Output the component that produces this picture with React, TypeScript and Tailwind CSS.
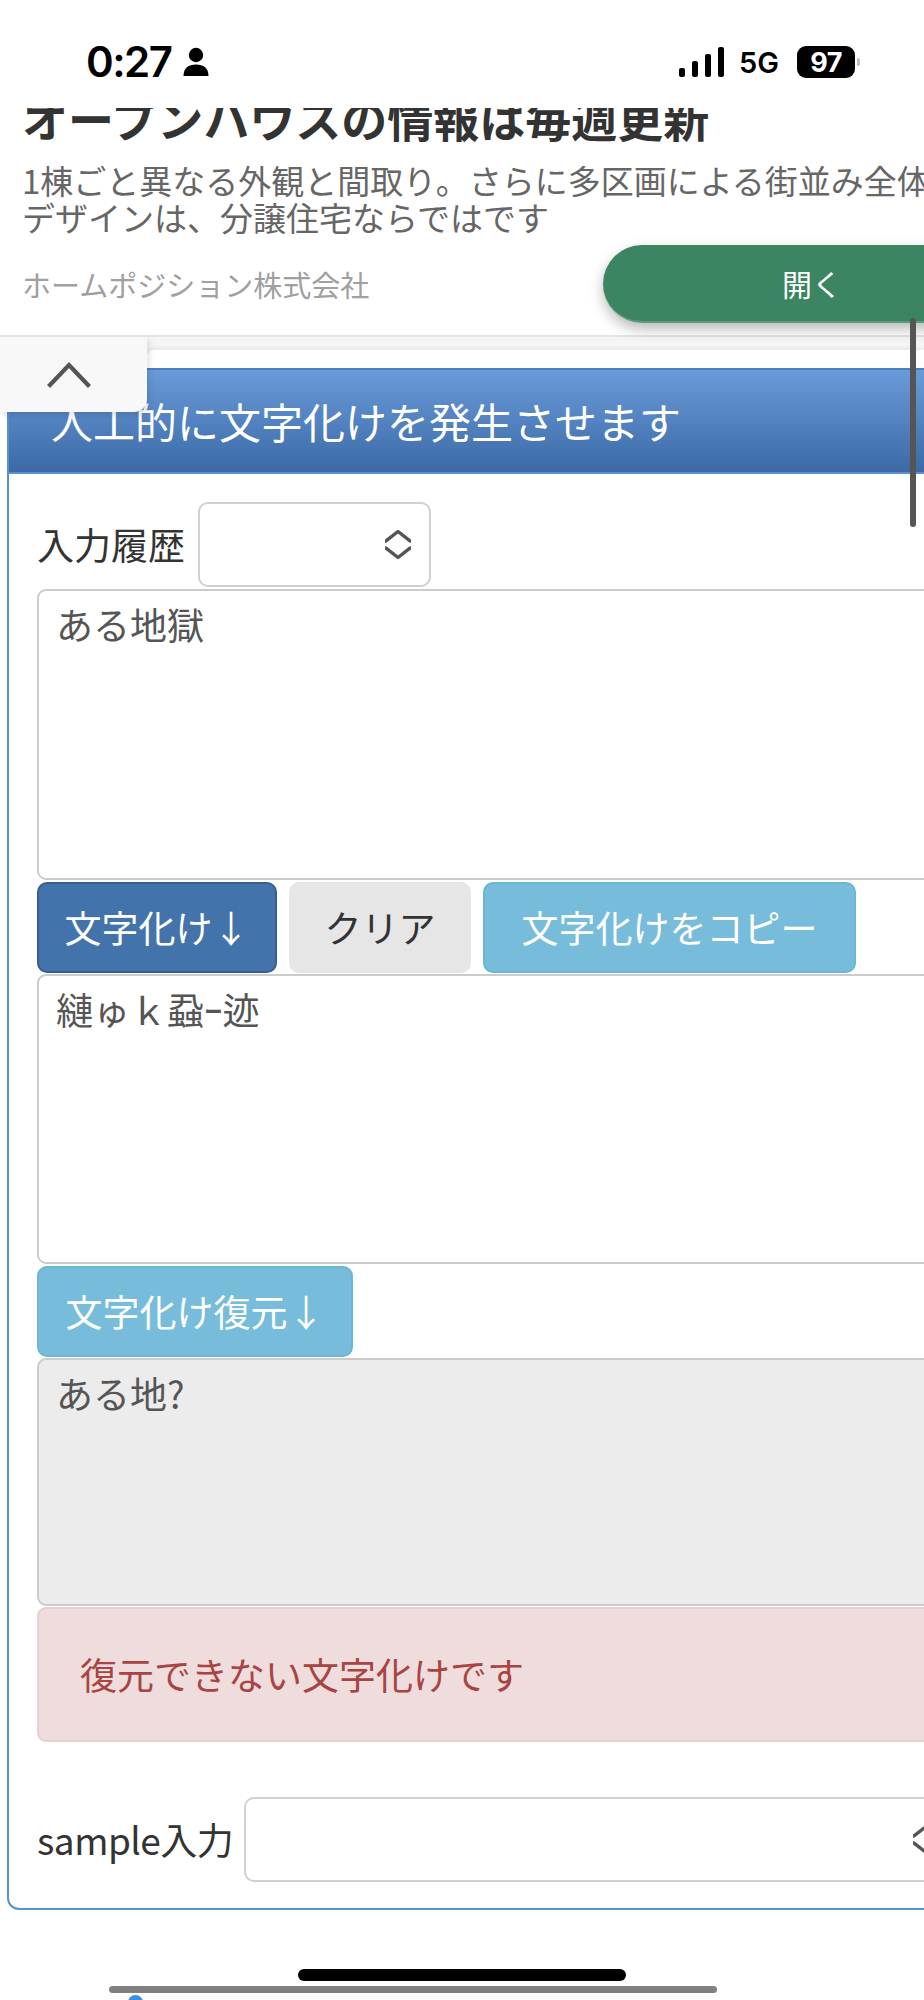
import React from "react";

const jp = "font-['Noto_Sans_CJK_JP','Noto_Sans',sans-serif]";

function UpDown({ className = "" }: { className?: string }) {
  return (
    <svg width="26" height="30" viewBox="0 0 26 30" className={className} fill="none">
      <polyline points="1,11 13,1.5 25,11" stroke="#555" strokeWidth="3.4" strokeLinecap="round" strokeLinejoin="round" />
      <polyline points="1,18 13,27.5 25,18" stroke="#555" strokeWidth="3.4" strokeLinecap="round" strokeLinejoin="round" />
    </svg>
  );
}

function StatusBar() {
  return (
    <div className="relative z-10 h-[108px] bg-white flex items-start pt-[40px]">
      <div className="flex items-center pl-[86px] h-[44px]">
        <span className="font-['Inter',sans-serif] font-semibold text-[42px] leading-none tracking-[-1.5px] text-black">0:27</span>
        <svg width="28" height="30" viewBox="0 0 28 30" className="ml-[11px]">
          <circle cx="14" cy="8" r="7.2" fill="#000" />
          <path d="M1.5 29 C1.5 21 6.5 17.5 14 17.5 C21.5 17.5 26.5 21 26.5 29 Z" fill="#000" />
        </svg>
      </div>
      <div className="ml-auto mr-[64px] flex items-center h-[44px]">
        <div className="flex items-end gap-[7px] h-[30px]">
          <div className="w-[6px] h-[9px] bg-black rounded-[2px]" />
          <div className="w-[6px] h-[16px] bg-black rounded-[2px]" />
          <div className="w-[6px] h-[23px] bg-black rounded-[2px]" />
          <div className="w-[6px] h-[30px] bg-black rounded-[2px]" />
        </div>
        <span className="ml-[15px] font-['Inter',sans-serif] font-semibold text-[29px] leading-none text-black">5G</span>
        <div className="ml-[18px] w-[58px] h-[32px] bg-black rounded-[9px] flex items-center justify-center">
          <span className="font-['Inter',sans-serif] font-bold text-[27px] leading-none text-white tracking-[-0.5px]">97</span>
        </div>
        <div className="ml-[2px] w-[3px] h-[8px] bg-[#bdbdbd] rounded-r-[2px]" />
      </div>
    </div>
  );
}

function Ad() {
  return (
    <div className={`relative flex flex-col h-[229px] bg-white border-b-2 border-[#e4e4e4] ${jp}`}>
      <div className="mt-[-14px] pl-[22px] text-[46px] leading-[46px] font-bold text-[#333] whitespace-nowrap">
        オープンハウスの情報は毎週更新
      </div>
      <div className="mt-[22px] pl-[22px] text-[33px] leading-[37px] text-[#666] whitespace-nowrap">
        <div>1棟ごと異なる外観と間取り。さらに多区画による街並み全体の</div>
        <div>デザインは、分譲住宅ならではです</div>
      </div>
      <div className="mt-[30px] pl-[22px] text-[29px] leading-[36px] text-[#a0a0a0] whitespace-nowrap">
        ホームポジション株式会社
      </div>
      <div className="absolute left-[603px] top-[137px] w-[420px] h-[78px] rounded-full bg-[#3b8562] border-b-2 border-[#5d9b7c] shadow-[0_6px_14px_rgba(0,0,0,0.28)] flex items-center pl-[179px]">
        <span className="text-[30px] leading-none text-white">開く</span>
      </div>
    </div>
  );
}

function Button({ children, className }: { children: React.ReactNode; className: string }) {
  return (
    <div className={`h-[91px] rounded-[10px] border-2 flex items-center justify-center text-[37px] leading-none ${className}`}>
      {children}
    </div>
  );
}

export default function App() {
  return (
    <div className={`relative w-[924px] h-[2000px] overflow-hidden bg-white ${jp}`}>
      <StatusBar />
      <Ad />
      {/* strip under the ad */}
      <div className="h-[31px] bg-[#f5f5f5] pt-[13px]">
        <div className="ml-[145px] h-[18px] bg-white rounded-tl-[10px] shadow-[0_-2px_4px_rgba(0,0,0,0.06)]" />
      </div>

      {/* panel */}
      <div className="ml-[7px] w-[1000px] border-l-2 border-b-2 border-[#5a8fd0] rounded-bl-[12px] bg-white">
        <div className="h-[106px] bg-gradient-to-b from-[#6a9bd8] to-[#3b6aa7] border-t-2 border-[#4c80c2] border-b-2 border-b-[#5b8fd0] flex items-center pl-[42px]">
          <span className="text-[42px] leading-none text-white">人工的に文字化けを発生させます</span>
        </div>
        <div className="pl-[28px] pt-[28px] pb-[26px]">
          <div className="flex items-center h-[85px]">
            <span className="text-[37px] leading-none text-[#333]">入力履歴</span>
            <div className="ml-[13px] w-[233px] h-[85px] border-2 border-[#d0d0d0] rounded-[10px] flex items-center justify-end pr-[18px]">
              <UpDown />
            </div>
          </div>
          <div className="mt-[2px] h-[291px] border-2 border-[#cccccc] rounded-[9px] pl-[17px] pt-[7px] text-[37px] leading-[52px] text-[#555]">
            ある地獄
          </div>
          <div className="mt-[2px] flex gap-[12px]">
            <Button className="w-[240px] bg-[#4273ab] border-[#365f90] text-white">文字化け↓</Button>
            <Button className="w-[182px] bg-[#e6e6e6] border-[#e6e6e6] text-[#333]">クリア</Button>
            <Button className="w-[373px] bg-[#77bcdb] border-[#6cb5d6] text-white">文字化けをコピー</Button>
          </div>
          <div className="mt-[1px] h-[290px] border-2 border-[#cccccc] rounded-[9px] pl-[17px] pt-[7px] text-[37px] leading-[52px] text-[#555]">
            縺ゅｋ蝨ｰ迹
          </div>
          <div className="mt-[2px] flex">
            <Button className="w-[316px] bg-[#77bcdb] border-[#6cb5d6] text-white">文字化け復元↓</Button>
          </div>
          <div className="mt-[1px] h-[248px] bg-[#ececec] border-2 border-[#cccccc] rounded-[9px] pl-[17px] pt-[7px] text-[37px] leading-[52px] text-[#555]">
            ある地?
          </div>
          <div className="mt-[1px] h-[135px] bg-[#efdddd] border-2 border-[#e9cfd2] rounded-[9px] flex items-center pl-[41px]">
            <span className="text-[37px] leading-none text-[#a94442]">復元できない文字化けです</span>
          </div>
          <div className="mt-[55px] flex items-center h-[85px]">
            <span className="text-[37px] leading-none text-[#333] tracking-[-0.5px]">sample入力</span>
            <div className="ml-[11px] w-[715px] h-[85px] border-2 border-[#d0d0d0] rounded-[10px] flex items-center justify-end pr-[18px]">
              <UpDown />
            </div>
          </div>
        </div>
      </div>

      {/* home indicator */}
      <div className="mt-[59px] ml-[298px] w-[328px] h-[12px] rounded-full bg-black" />
      <div className="mt-[5px] ml-[109px] w-[608px] h-[7px] rounded-full bg-[#808080]" />

      {/* overlays */}
      <div className="absolute left-0 top-[337px] w-[147px] h-[75px] bg-[#f8f8f8] rounded-br-[13px] shadow-[2px_3px_6px_rgba(0,0,0,0.12)] z-20 flex items-center justify-center pr-[9px]">
        <svg width="44" height="26" viewBox="0 0 44 26" fill="none">
          <polyline points="3,23 22,3 41,23" stroke="#555" strokeWidth="4.2" strokeLinecap="square" />
        </svg>
      </div>
      <div className="absolute left-[910px] top-[318px] w-[6px] h-[209px] rounded-full bg-[#555] z-30" />
      <div className="absolute left-[128px] top-[1995px] w-[15px] h-[15px] rounded-full bg-[#3a8ee6]" />
    </div>
  );
}
